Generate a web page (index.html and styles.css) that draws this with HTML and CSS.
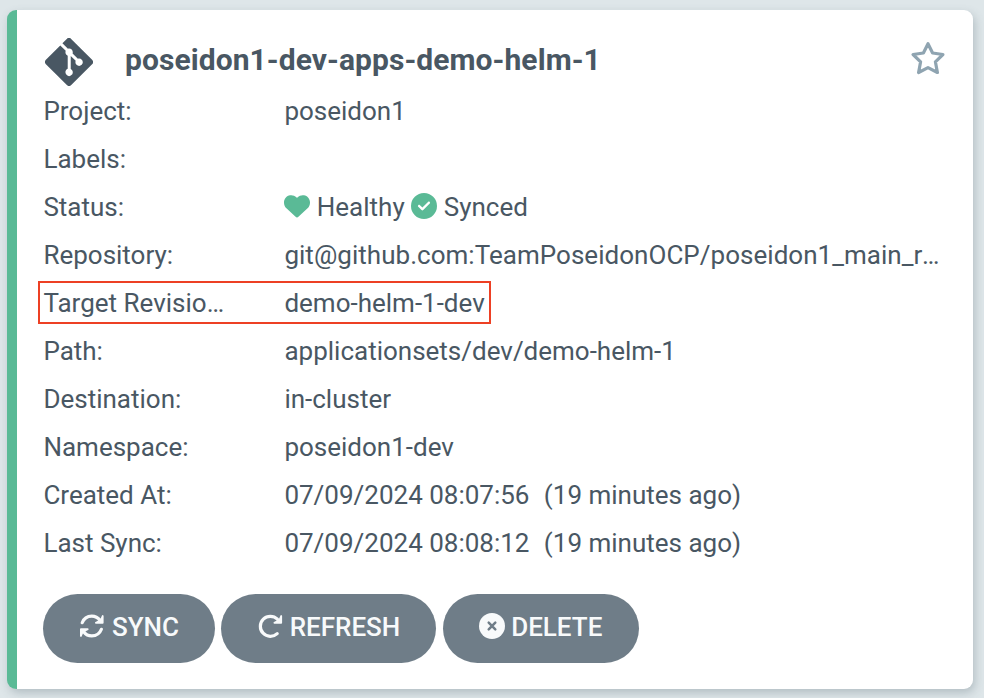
FILE: index.html
```html
<!DOCTYPE html>
<html lang="en">
<head>
<meta charset="utf-8">
<title>Applications</title>
<link rel="stylesheet" href="styles.css">
</head>
<body>
<article class="card">
  <header class="head">
    <svg class="git" viewBox="0 32 448 448"><path d="M439.55 236.05L244 40.45a28.87 28.87 0 0 0-40.81 0l-40.66 40.63 51.52 51.52c27.06-9.14 52.68 16.77 43.39 43.68l49.66 49.66c34.23-11.8 61.18 31 35.47 56.69-26.49 26.49-70.21-2.87-56-37.34L240.22 199v121.85c25.3 12.54 22.26 41.85 9.08 55a34.34 34.34 0 0 1-48.55 0c-17.57-17.6-11.07-46.91 11.25-56v-123c-20.8-8.51-24.6-30.74-18.64-45L142.57 101 8.45 235.14a28.86 28.86 0 0 0 0 40.81l195.61 195.6a28.86 28.86 0 0 0 40.8 0l194.69-194.69a28.86 28.86 0 0 0 0-40.81z"/></svg>
    <h1 class="title">poseidon1-dev-apps-demo-helm-1</h1>
    <svg class="star" viewBox="0 0 34 34"><path d="M17 2.700l4.600 9.300 10.300 1.500-7.500 7.300 2 10.700-9.400-4.900-9.400 4.900 2-10.700-7.500-7.300 10.300-1.500z"/></svg>
  </header>
  <dl class="rows">
    <div class="row"><dt>Project:</dt><dd>poseidon1</dd></div>
    <div class="row"><dt>Labels:</dt><dd></dd></div>
    <div class="row"><dt>Status:</dt><dd class="status">
      <svg class="mark" viewBox="0 0 512 512"><path d="M47.6 300.4L228.3 469.100c7.500 7 17.400 10.900 27.700 10.900s20.200-3.900 27.700-10.900L464.400 300.400c30.400-28.300 47.600-68 47.600-109.500v-5.800c0-69.900-50.500-129.500-119.400-141C347 36.500 300.600 51.400 268 84L256 96 244 84c-32.600-32.600-79-47.500-124.600-39.900C50.500 55.600 0 115.200 0 185.100v5.800c0 41.500 17.200 81.200 47.600 109.500z"/></svg>
      <span class="health">Healthy</span>
      <svg class="mark" viewBox="0 0 512 512"><path d="M256 512A256 256 0 1 0 256 0a256 256 0 1 0 0 512zM369 209L241 337c-9.400 9.400-24.600 9.400-33.900 0l-64-64c-9.400-9.400-9.400-24.600 0-33.900s24.600-9.400 33.900 0l47 47L335 175c9.400-9.400 24.600-9.400 33.900 0s9.400 24.600 0 33.900z"/></svg>
      <span>Synced</span></dd></div>
    <div class="row"><dt>Repository:</dt><dd class="repo">git@github.com:TeamPoseidonOCP/poseidon1_main_repo.git</dd></div>
    <div class="row marked"><dt>Target Revision:</dt><dd>demo-helm-1-dev</dd></div>
    <div class="row"><dt>Path:</dt><dd>applicationsets/dev/demo-helm-1</dd></div>
    <div class="row"><dt>Destination:</dt><dd>in-cluster</dd></div>
    <div class="row"><dt>Namespace:</dt><dd>poseidon1-dev</dd></div>
    <div class="row"><dt>Created At:</dt><dd>07/09/2024 08:07:56 <span class="ago">&nbsp;(19 minutes ago)</span></dd></div>
    <div class="row"><dt>Last Sync:</dt><dd>07/09/2024 08:08:12 <span class="ago">&nbsp;(19 minutes ago)</span></dd></div>
  </dl>
  <footer class="actions">
    <button class="btn sync"><svg class="line" viewBox="0 0 26 26"><path d="M3.200 9.700C4.700 5.800 8.400 3.100 12.800 3.100c3.500 0 6.200 1.500 8.200 4.200M22.400 16.300C20.900 20.200 17.200 22.900 12.800 22.900c-3.500 0-6.200-1.500-8.200-4.200"/><path class="tip" d="M23.700 3v6.800h-6.800l2.800-1.400 2.800-2.500zM1.900 23v-6.800h6.800l-2.800 1.400-2.800 2.500z"/></svg>SYNC</button>
    <button class="btn refresh"><svg class="line" viewBox="-1 0 26 26"><path d="M19.200 20.600A10 10 0 1 1 19.400 6.200l1.600 1.800"/><path class="tip" d="M23.200 3v6.800h-6.800l2.800-1.400 2.800-2.500z"/></svg>REFRESH</button>
    <button class="btn delete"><svg class="solid" viewBox="0 0 26 26"><circle cx="13" cy="13" r="13"/><path d="M9.700 9.700l6.600 6.600M16.300 9.700l-6.600 6.600"/></svg>DELETE</button>
  </footer>
</article>
</body>
</html>
```
FILE: styles.css
```css
*, *::after { box-sizing: border-box; }
body {
  margin: 0;
  height: 698px;
  padding: 10px 11px 9px 7px;
  overflow: hidden;
  background: #dee6e9;
  color: #495763;
  font: 26px/48px Roboto, sans-serif;
}
.card {
  height: 679px;
  padding: 27px 28px 0 26px;
  background: #fff;
  border-left: 10px solid #5aba96;
  border-radius: 9px;
  box-shadow: 2px 4px 10px rgba(80, 100, 110, .3);
}
.head { display: flex; height: 50px; align-items: center; }
.git { width: 48px; height: 48px; margin-left: 2px; fill: #495763; }
.title {
  flex: 1;
  margin: -5px 0 0 32px;
  font-size: 30px;
  font-weight: 700;
  letter-spacing: .07px;
}
.star {
  width: 34px;
  height: 34px;
  margin-top: -9px;
  fill: none;
  stroke: #8fa4b1;
  stroke-width: 3.2;
  stroke-linejoin: round;
}
.rows { margin: 0; }
.row { display: flex; position: relative; height: 48px; }
dt, dd {
  margin: 0;
  overflow: hidden;
  white-space: nowrap;
  text-overflow: ellipsis;
}
dt { width: 183px; margin-right: 58px; padding-left: .4px; flex: none; }
dd { width: 657px; padding-left: .4px; }
.repo { letter-spacing: .03px; }
.ago { margin-left: 1.5px; }
.status { display: flex; align-items: center; }
.mark { width: 26px; height: 26px; margin: -2px 6.4px 0 0; fill: #5aba96; }
.health { margin-right: 6.6px; }
.marked::after {
  content: "";
  position: absolute;
  left: -5px;
  top: 2px;
  width: 453px;
  height: 43px;
  border: 2px solid #ed4024;
}
.actions { display: flex; margin-top: 27px; }
.btn {
  display: flex;
  align-items: center;
  justify-content: center;
  height: 69px;
  padding: 0 0 3px;
  border: 0;
  border-radius: 35px;
  background: #6f7d88;
  color: #f8fafb;
  font: 500 26px Roboto, sans-serif;
}
.btn svg { width: 26px; height: 26px; margin: -2px 7px 0 0; }
.sync { width: 172px; margin-right: 6px; }
.refresh { width: 215px; margin-right: 7px; }
.delete { width: 196px; padding-right: 1px; }
.delete svg { margin-right: 6.500px; }
.line {
  fill: none;
  stroke: #f8fafb;
  stroke-width: 3.2;
  stroke-linecap: round;
  stroke-linejoin: round;
}
.tip { fill: #f8fafb; stroke-width: 1.800; }
.solid { fill: #f8fafb; stroke: none; }
.solid path { stroke: #6f7d88; stroke-width: 2.500; stroke-linecap: round; }
```
